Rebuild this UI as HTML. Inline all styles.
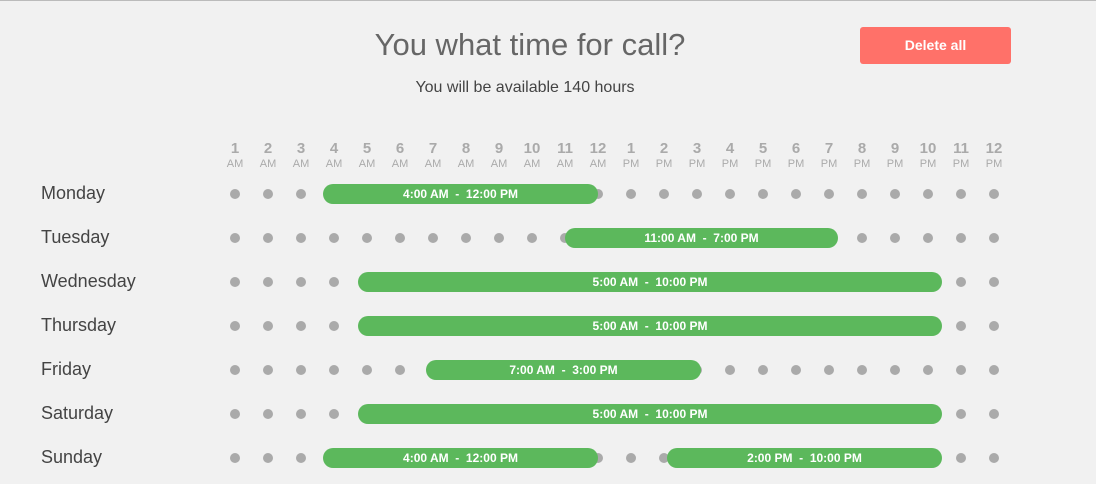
<!DOCTYPE html>
<html><head><style>
body{margin:0;width:1096px;height:484px;background:#f1f1f1;font-family:"Liberation Sans",sans-serif;position:relative;overflow:hidden;border-top:1px solid #bbb;box-sizing:border-box}
.a{position:absolute}
.t{left:0;width:1060px;text-align:center;top:26px;font-size:31px;color:#666}
.s{left:0;width:1050px;text-align:center;top:78px;font-size:16px;color:#444}
.btn{left:860px;top:26px;width:151px;height:37px;background:#ff7169;border-radius:3px;color:#fff;font-size:14px;font-weight:bold;text-align:center;line-height:37px}
.n{width:30px;margin-left:-15px;text-align:center;color:#aaa}
.n b{display:block;font-size:15px;line-height:16px}
.n i{display:block;font-style:normal;font-size:11px;line-height:14px}
.d{font-size:18px;color:#444;left:41px}
.dot{width:10px;height:10px;border-radius:50%;background:#aaa;margin:-5px 0 0 -5px}
.bar{height:20px;margin-top:-10px;background:#5cb85c;border-radius:10px;color:#fff;font-size:12px;font-weight:bold;text-align:center;line-height:20px}
</style></head><body>
<div class="a t">You what time for call?</div>
<div class="a s">You will be available 140 hours</div>
<div class="a btn">Delete all</div>
<div id="g"></div>
<script>
var h='',days=['Monday','Tuesday','Wednesday','Thursday','Friday','Saturday','Sunday'];
for(var i=0;i<24;i++){var x=235+33*i,n=i%12+1;h+='<div class="a n" style="left:'+x+'px;top:140px"><b>'+n+'</b><i>'+(i<12?'AM':'PM')+'</i></div>';}
var bars=[[[323,598,'4:00 AM&nbsp; - &nbsp;12:00 PM']],[[565,838,'11:00 AM&nbsp; - &nbsp;7:00 PM']],[[358,942,'5:00 AM&nbsp; - &nbsp;10:00 PM']],[[358,942,'5:00 AM&nbsp; - &nbsp;10:00 PM']],[[426,701,'7:00 AM&nbsp; - &nbsp;3:00 PM']],[[358,942,'5:00 AM&nbsp; - &nbsp;10:00 PM']],[[323,598,'4:00 AM&nbsp; - &nbsp;12:00 PM'],[667,942,'2:00 PM&nbsp; - &nbsp;10:00 PM']]];
for(var r=0;r<7;r++){var y=193+44*r;h+='<div class="a d" style="top:'+(y-11)+'px">'+days[r]+'</div>';
for(var i=0;i<24;i++)h+='<div class="a dot" style="left:'+(235+33*i)+'px;top:'+y+'px"></div>';
bars[r].forEach(function(b){h+='<div class="a bar" style="left:'+b[0]+'px;width:'+(b[1]-b[0])+'px;top:'+y+'px">'+b[2]+'</div>';});}
document.getElementById('g').innerHTML=h;
</script>
</body></html>
